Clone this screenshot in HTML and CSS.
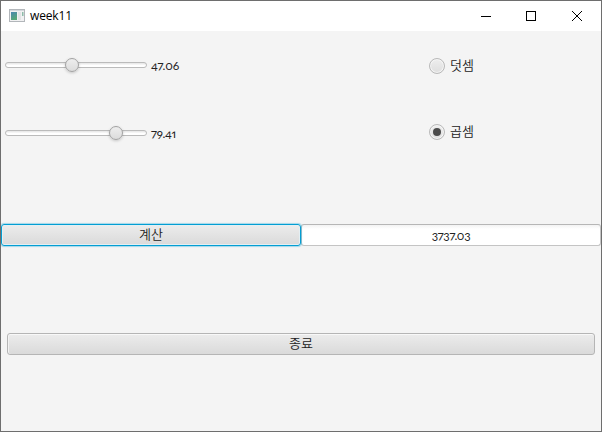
FILE: index.html
```html
<!DOCTYPE html>
<html lang="ko">
<head>
<meta charset="utf-8">
<title>week11</title>
<link rel="stylesheet" href="styles.css">
</head>
<body>
<div class="window">
  <header class="titlebar">
    <svg class="app-icon" width="16" height="14" viewBox="0 0 16 14">
      <defs><linearGradient id="g" x1="0" y1="0" x2="0.4" y2="1"><stop offset="0" stop-color="#4a87b0"/><stop offset="1" stop-color="#57a777"/></linearGradient></defs>
      <rect x="0.5" y="0.5" width="15" height="12" fill="#f1f1f2" stroke="#b2b6ba"/>
      <path d="M1 1.5h14" stroke="#d4d8dc"/>
      <rect x="2" y="3" width="6" height="8" fill="url(#g)"/>
      <path d="M9 3h3v8H9z" fill="#e2e4e5"/>
      <path d="M13 3h1.5v4H13z" fill="#8dbca9"/>
    </svg>
    <span class="title">week11</span>
    <div class="controls">
      <svg width="46" height="29" viewBox="0 0 46 29"><path d="M18 14.5h10" stroke="#000"/></svg>
      <svg width="46" height="29" viewBox="0 0 46 29"><rect x="17.5" y="9.5" width="9" height="9" fill="none" stroke="#000"/></svg>
      <svg width="46" height="29" viewBox="0 0 46 29"><path d="M17 9l10 10M27 9L17 19" stroke="#000"/></svg>
    </div>
  </header>
  <main class="content">
    <div class="row first">
      <div class="slider"><div class="thumb" style="left:60px"></div></div>
      <span class="value">47.06</span>
      <label class="option"><span class="radio"></span><span class="label">덧셈</span></label>
    </div>
    <div class="row second">
      <div class="slider"><div class="thumb" style="left:104px"></div></div>
      <span class="value">79.41</span>
      <label class="option"><span class="radio checked"></span><span class="label">곱셈</span></label>
    </div>
    <div class="calc">
      <div class="button focused">계산</div>
      <div class="result"><span>3737.03</span></div>
    </div>
    <div class="button exit">종료</div>
  </main>
</div>
</body>
</html>
```
FILE: styles.css
```css
* { box-sizing: border-box; }
body { margin: 0; font: 350 13px/16px "Noto Sans CJK KR", sans-serif; color: #222; }
.window { width: 602px; height: 432px; border: 1px solid #6e6e6e; background: #f4f4f4; overflow: hidden; }
.titlebar { height: 30px; background: #fff; display: flex; align-items: center; padding-left: 8px; color: #000; }
.app-icon { margin-right: 5px; }
.title { font: 12px/16px "Open Sans", sans-serif; letter-spacing: -0.15px; }
.controls { display: flex; margin-left: auto; }
.row { display: flex; align-items: center; height: 16px; padding-left: 4px; }
.first { margin-top: 27px; }
.second { margin-top: 50px; }
.slider { position: relative; width: 142px; height: 6px; border: 1px solid #bbb; border-radius: 3px; background: linear-gradient(#e4e4e4, #fff 60%); }
.second .slider { top: 1px; }
.first .slider { top: -1px; }
.thumb { position: absolute; top: -5px; width: 14px; height: 14px; border: 1px solid #a2a2a2; border-radius: 50%; background: linear-gradient(#eee, #dcdcdc); box-shadow: 0 1px 3px #0003; margin-left: -1px; }
.value, .result span { font-family: Lato, "Open Sans", sans-serif; font-weight: 400; font-size: 12px; font-variant-numeric: oldstyle-nums proportional-nums; }
.value { width: 278px; margin-left: 4px; letter-spacing: -0.2px; }
.result span { letter-spacing: -0.35px; }
.second .value { padding-top: 3px; }
.option { display: flex; align-items: center; gap: 5px; }
.label { padding-bottom: 2px; }
.radio { width: 16px; height: 16px; border: 1px solid #b9b9b9; border-radius: 50%; background: linear-gradient(#eee, #dedede); box-shadow: inset 0 0 0 1px #f5f5f5; display: grid; place-items: center; }
.checked::after { content: ""; width: 8px; height: 8px; border-radius: 50%; background: #4b4b4b; }
.calc { display: flex; margin-top: 84px; }
.button { height: 22px; border: 1px solid #b5b5b5; border-radius: 3px; background: linear-gradient(#ececec, #dadada); box-shadow: inset 0 1px #f8f8f8, inset 1px 0 #f2f2f2; line-height: 18px; text-align: center; }
.focused { width: 300px; border-color: #039ed3; box-shadow: 0 0 1px 1px #039ed355, inset 0 0 0 1px #e4eff3; z-index: 1; }
.result { width: 300px; height: 22px; border: 1px solid #c4c4c4; border-top-color: #b6b6b6; border-radius: 3px; background: linear-gradient(#f3f3f3, #fff 4px); text-align: center; line-height: 20px; }
.exit { margin: 87px 6px 0; }
```
